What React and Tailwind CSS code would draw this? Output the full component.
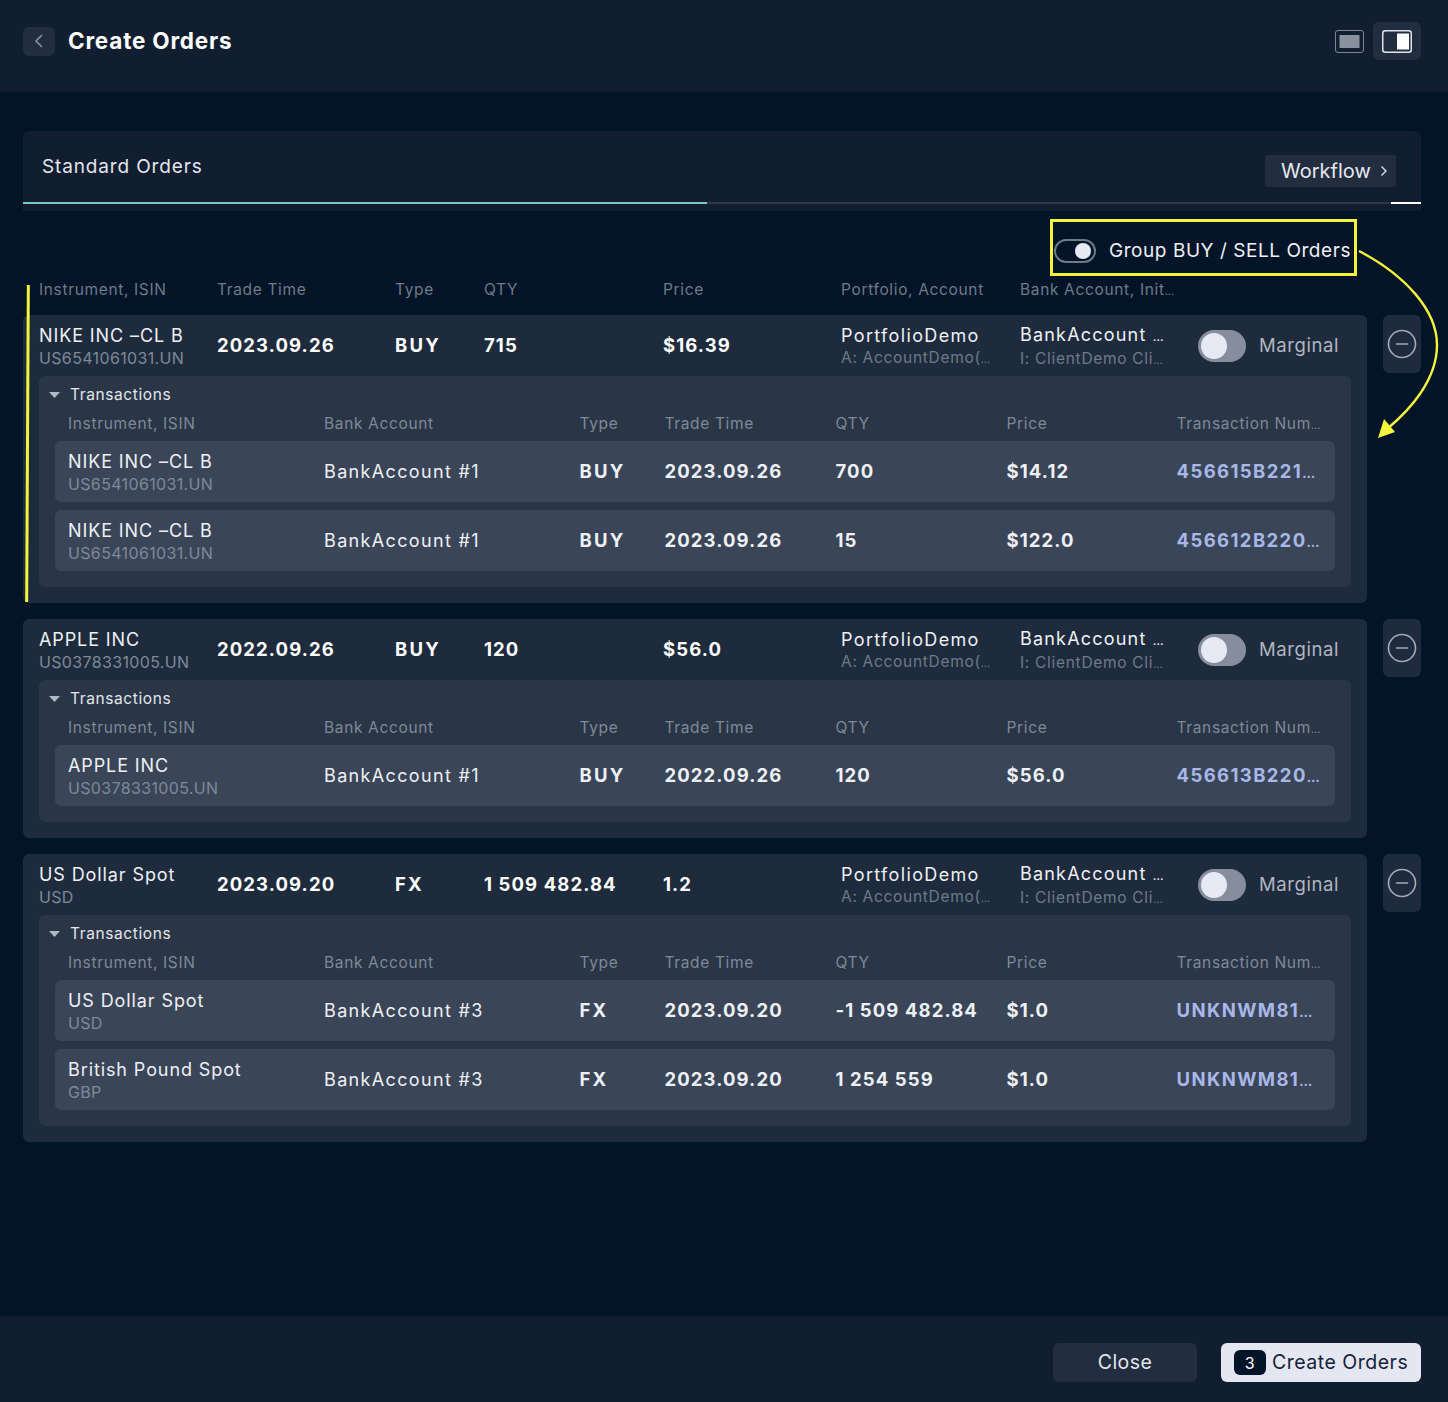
import React from "react";

const font = { fontFamily: '"Inter", "Liberation Sans", sans-serif' };

const orders = [
  {
    name: "NIKE INC –CL B", isin: "US6541061031.UN", time: "2023.09.26", type: "BUY", qty: "715", price: "$16.39",
    tx: [
      { name: "NIKE INC –CL B", isin: "US6541061031.UN", bank: "BankAccount #1", type: "BUY", time: "2023.09.26", qty: "700", price: "$14.12", num: "456615B221" },
      { name: "NIKE INC –CL B", isin: "US6541061031.UN", bank: "BankAccount #1", type: "BUY", time: "2023.09.26", qty: "15", price: "$122.0", num: "456612B220" },
    ],
  },
  {
    name: "APPLE INC", isin: "US0378331005.UN", time: "2022.09.26", type: "BUY", qty: "120", price: "$56.0",
    tx: [
      { name: "APPLE INC", isin: "US0378331005.UN", bank: "BankAccount #1", type: "BUY", time: "2022.09.26", qty: "120", price: "$56.0", num: "456613B220" },
    ],
  },
  {
    name: "US Dollar Spot", isin: "USD", time: "2023.09.20", type: "FX", qty: "1 509 482.84", price: "1.2",
    tx: [
      { name: "US Dollar Spot", isin: "USD", bank: "BankAccount #3", type: "FX", time: "2023.09.20", qty: "-1 509 482.84", price: "$1.0", num: "UNKNWM81" },
      { name: "British Pound Spot", isin: "GBP", bank: "BankAccount #3", type: "FX", time: "2023.09.20", qty: "1 254 559", price: "$1.0", num: "UNKNWM81" },
    ],
  },
];

const outerCols = "grid grid-cols-[178px_178px_89px_179px_178px_179px_178px_153px] items-center";
const innerCols = "grid grid-cols-[256px_255.5px_85px_171px_171px_170px_145px] items-center";

function Dots() {
  return <span className="text-[0.7em] tracking-normal">…</span>;
}

function TxRow({ t }) {
  const strong = "text-[18.5px] font-bold text-[#eef0f6] tracking-[1.1px] whitespace-nowrap";
  return (
    <div className={`${innerCols} h-[61px] rounded-md bg-[#3a4657] px-[13px]`}>
      <div className="flex flex-col">
        <span className="whitespace-nowrap text-[18px] leading-[24px] tracking-[0.9px] text-[#eef0f6]">{t.name}</span>
        <span className="text-[16px] leading-[20px] tracking-[0.35px] text-[#7f8998]">{t.isin}</span>
      </div>
      <span className="text-[18px] tracking-[1.35px] text-[#eef0f6]">{t.bank}</span>
      <span className="whitespace-nowrap text-[18.5px] font-bold tracking-[2.2px] text-[#eef0f6]">{t.type}</span>
      <span className={strong}>{t.time}</span>
      <span className={strong}>{t.qty}</span>
      <span className={strong}>{t.price}</span>
      <span className="whitespace-nowrap text-[18.5px] font-bold tracking-[1.4px] text-[#a9b7e8]">{t.num}<Dots /></span>
    </div>
  );
}

function Order({ o }) {
  const strong = "text-[18.5px] font-bold text-white tracking-[1.1px] whitespace-nowrap";
  return (
    <div className="flex items-start gap-4">
      <div className="w-[1344px] rounded-md bg-[#1e2b3c] px-4 pb-4">
        <div className={`${outerCols} h-[61px]`}>
          <div className="flex flex-col">
            <span className="whitespace-nowrap text-[18px] leading-[24px] tracking-[0.9px] text-[#eef0f6]">{o.name}</span>
            <span className="text-[16px] leading-[20px] tracking-[0.35px] text-[#7f8998]">{o.isin}</span>
          </div>
          <span className={strong}>{o.time}</span>
          <span className="whitespace-nowrap text-[18.5px] font-bold tracking-[2.2px] text-white">{o.type}</span>
          <span className={strong}>{o.qty}</span>
          <span className={strong}>{o.price}</span>
          <div className="mt-[1px] flex flex-col">
            <span className="text-[18px] leading-[24px] tracking-[1.35px] text-[#eef0f6]">PortfolioDemo</span>
            <span className="whitespace-nowrap text-[15.5px] leading-[20px] tracking-[0.7px] text-[#6f7a8a]">A: AccountDemo(<Dots /></span>
          </div>
          <div className="mt-[1px] flex flex-col">
            <span className="whitespace-nowrap text-[18px] leading-[24px] tracking-[1.2px] text-[#eef0f6]">BankAccount <Dots /></span>
            <span className="whitespace-nowrap text-[15.5px] leading-[20px] tracking-[0.7px] text-[#6f7a8a]">I: ClientDemo Cli<Dots /></span>
          </div>
          <div className="flex items-center gap-[13px]">
            <div className="flex h-8 w-12 items-center rounded-full bg-[#868d9c] pl-[3px]">
              <div className="size-[26px] rounded-full bg-[#e7e9f5]" />
            </div>
            <span className="text-[18.5px] tracking-[0.6px] text-[#b0b6c2]">Marginal</span>
          </div>
        </div>
        <div className="rounded-md bg-[#2a3646] px-4 pb-4">
          <div className="flex h-9 items-center gap-[10px] pt-[1px]">
            <svg width="11" height="6" viewBox="0 0 11 6" className="-ml-[6px]"><path d="M0 0h11L5.5 6z" fill="#b0b6c2" /></svg>
            <span className="text-[15.5px] tracking-[0.6px] text-[#e3e6ee]">Transactions</span>
          </div>
          <div className={`${innerCols} h-[29px] px-[13px] pb-[6px]`}>
            {["Instrument, ISIN", "Bank Account", "Type", "Trade Time", "QTY", "Price"].map((h) => (
              <span key={h} className="whitespace-nowrap text-[15.5px] tracking-[0.65px] text-[#7f8998]">{h}</span>
            ))}
            <span className="whitespace-nowrap text-[15.5px] tracking-[0.65px] text-[#7f8998]">Transaction Num<Dots /></span>
          </div>
          <div className="flex flex-col gap-2">
            {o.tx.map((t, i) => <TxRow key={i} t={t} />)}
          </div>
        </div>
      </div>
      <button className="flex h-[58px] w-[38px] items-center justify-center rounded-md bg-[#1e2b3c]">
        <svg width="30" height="30" viewBox="0 0 30 30" fill="none">
          <circle cx="15" cy="15" r="13.5" stroke="#a6abb5" strokeWidth="1.6" />
          <path d="M9.5 15h11" stroke="#a6abb5" strokeWidth="1.6" strokeLinecap="round" />
        </svg>
      </button>
    </div>
  );
}

export default function App() {
  return (
    <div className="relative flex h-[1402px] w-[1448px] flex-col overflow-hidden bg-[#021427]" style={font}>
      <header className="flex h-[92px] shrink-0 items-start justify-between bg-[#101e2f] pl-[23px] pr-[27px] pt-[22px]">
        <div className="flex h-[38px] items-center gap-[13px]">
          <button className="flex h-[29px] w-8 items-center justify-center rounded-md bg-[#222e3f]">
            <svg width="10" height="14" viewBox="0 0 10 14" fill="none"><path d="M8 1L2 7l6 6" stroke="#8d95a3" strokeWidth="1.5" /></svg>
          </button>
          <h1 className="text-[22.5px] font-bold tracking-[0.8px] text-white">Create Orders</h1>
        </div>
        <div className="flex items-center gap-[9px]">
          <svg width="29" height="23" viewBox="0 0 29 23" fill="none">
            <rect x="0.5" y="0.5" width="28" height="22" rx="2.5" stroke="#7c8695" />
            <rect x="4.5" y="5" width="20" height="13" fill="#8a919e" />
          </svg>
          <div className="flex h-[38px] w-12 items-center justify-center rounded-md bg-[#222e3f]">
            <svg width="30" height="23" viewBox="0 0 30 23" fill="none">
              <rect x="0.75" y="0.75" width="28.5" height="21.5" rx="2.5" stroke="#dfe3ea" strokeWidth="1.5" />
              <rect x="15" y="3.5" width="12" height="16" fill="#fff" />
            </svg>
          </div>
        </div>
      </header>

      <main className="flex-1 pl-[23px] pt-[39px]">
        <div className="h-20 w-[1398px] rounded-t-md bg-[#101e2f]">
          <div className="flex h-[71px] items-start justify-between pl-[19px] pr-[25px]">
            <span className="pt-[22px] text-[19px] tracking-[0.85px] text-[#e3e6ee]">Standard Orders</span>
            <button className="mt-[24px] flex h-8 w-[131px] items-center gap-[9px] rounded-[3px] bg-[#222e3f] pb-[1px] pl-4 text-[20px] text-[#e7e9f0]">
              Workflow
              <svg width="8" height="12" viewBox="0 0 8 12" fill="none"><path d="M1.5 1.5L6 6l-4.5 4.5" stroke="#e7e9f0" strokeWidth="1.3" /></svg>
            </button>
          </div>
          <div className="flex h-[2px]">
            <div className="w-[684px] bg-[#76cbc1]" />
            <div className="w-[684px] bg-[#2d3948]" />
            <div className="w-[30px] bg-white" />
          </div>
        </div>

        <div className="flex w-[1334px] justify-end pt-2">
          <div className="flex h-[57px] w-[307px] items-center gap-[13px] border-[3px] border-[#f4f43c] pl-[1px] pt-[6px]">
            <div className="flex h-6 w-[42px] items-center justify-end rounded-full border-2 border-[#6e7886] pr-[3px]">
              <div className="size-4 rounded-full bg-[#e7e9f5]" />
            </div>
            <span className="whitespace-nowrap pt-[1px] text-[19px] tracking-[0.55px] text-[#eef0f6]">Group BUY / SELL Orders</span>
          </div>
        </div>

        <div className={`${outerCols} h-[39px] w-[1344px] px-4 pb-3`}>
          {["Instrument, ISIN", "Trade Time", "Type", "QTY", "Price", "Portfolio, Account"].map((h) => (
            <span key={h} className="whitespace-nowrap text-[15.5px] tracking-[0.65px] text-[#6f7a8a]">{h}</span>
          ))}
          <span className="whitespace-nowrap text-[15.5px] tracking-[0.65px] text-[#6f7a8a]">Bank Account, Init<Dots /></span>
        </div>

        <div className="flex flex-col gap-4">
          {orders.map((o, i) => <Order key={i} o={o} />)}
        </div>
      </main>

      <footer className="flex h-[86px] shrink-0 items-start justify-end gap-6 bg-[#101e2f] pr-[27px] pt-[27px]">
        <button className="h-[39px] w-[144px] rounded-md bg-[#222e3f] text-[19.5px] tracking-[0.4px] text-[#e3e6ee]">Close</button>
        <button className="flex h-[39px] w-[200px] items-center gap-[6px] rounded-md bg-[#e4e6f2] pl-[13px] text-[19.5px] tracking-[0.5px] text-[#13233a]">
          <span className="flex h-[25px] w-8 items-center justify-center rounded-md bg-[#021427] text-[16px] text-white">3</span>
          Create Orders
        </button>
      </footer>

      <div className="absolute left-[26px] top-[285px] h-[317px] w-[3px] rotate-[0.3deg] bg-[#f4f43c]" />
      <svg className="absolute left-[1355px] top-[245px]" width="90" height="200" viewBox="0 0 90 200" fill="none">
        <path d="M4 6C50 30 82 65 82 100C82 135 55 165 32 184" stroke="#f4f43c" strokeWidth="2.4" />
        <path d="M23 193l6-19 11 13z" fill="#f4f43c" />
      </svg>
    </div>
  );
}
